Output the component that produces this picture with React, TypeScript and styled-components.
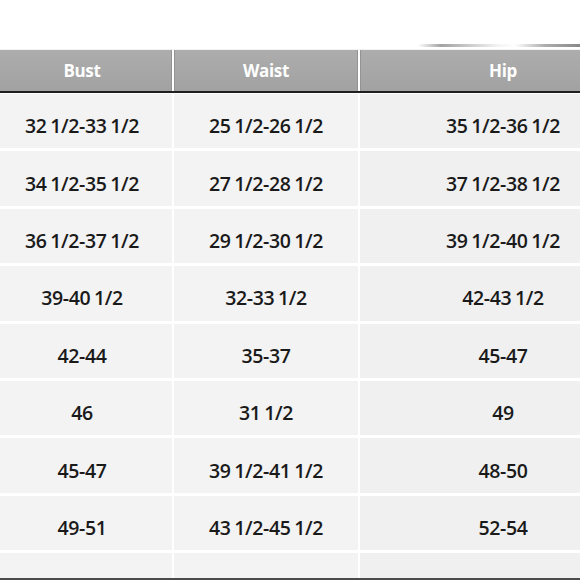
import React from "react";
import styled, { createGlobalStyle } from "styled-components";

const GlobalStyle = createGlobalStyle`
  html, body {
    margin: 0;
    padding: 0;
    background: #ffffff;
    overflow: hidden;
  }
  body {
    font-family: "Open Sans", "Liberation Sans", sans-serif;
  }
`;

const Sheet = styled.div`
  width: 656px;
  height: 580px;
  margin-left: -8px;
  overflow: hidden;
  display: flex;
  flex-direction: column;
  background: #ffffff;
  border-bottom: 2px solid #4b4b4b;
  box-sizing: border-box;
`;

const TopBand = styled.div`
  height: 49px;
  flex-shrink: 0;
  display: flex;
  align-items: flex-end;
`;

const EdgeShadow = styled.div`
  width: 230px;
  height: 3px;
  margin-left: 426px;
  margin-bottom: 2px;
  background: linear-gradient(
    to right,
    rgba(150, 150, 150, 0) 0%,
    rgba(140, 140, 140, 0.8) 10%,
    rgba(200, 200, 200, 0.2) 35%,
    rgba(255, 255, 255, 0) 42%,
    rgba(140, 140, 140, 0.7) 55%,
    #707070 80%,
    #666 100%
  );
`;

const cols = "180px 184px 286px";

const HeaderRow = styled.div`
  display: grid;
  grid-template-columns: ${cols};
  column-gap: 2px;
  background: #ffffff;
  border-top: 1px solid #f2f2f2;
  border-bottom: 2px solid #1f1f1f;
  flex-shrink: 0;
`;

const HeadCell = styled.div`
  height: 41px;
  display: flex;
  align-items: center;
  justify-content: center;
  background: linear-gradient(#adadad, #a6a6a6 60%, #a2a2a2);
  box-shadow: inset 1px 0 0 #939393, inset -1px 0 0 #939393;
  color: #ffffff;
  font-weight: 700;
  font-size: 17px;
  letter-spacing: -0.3px;
`;

const Body = styled.div`
  display: grid;
  grid-template-columns: ${cols};
  grid-auto-rows: 54.4px;
  column-gap: 2px;
  row-gap: 3px;
  padding-top: 1px;
  background: #ffffff;
`;

const Cell = styled.div<{ $shade?: boolean }>`
  display: flex;
  align-items: center;
  justify-content: center;
  padding-top: 9px;
  box-sizing: border-box;
  background: ${(p) => (p.$shade ? "#f0f0f0" : "#f3f3f3")};
  color: #1a1a1a;
  font-size: 19.5px;
  font-weight: 600;
  letter-spacing: -0.4px;
  word-spacing: -0.8px;
  white-space: nowrap;
`;

const rows: [string, string, string][] = [
  ["32 1/2-33 1/2", "25 1/2-26 1/2", "35 1/2-36 1/2"],
  ["34 1/2-35 1/2", "27 1/2-28 1/2", "37 1/2-38 1/2"],
  ["36 1/2-37 1/2", "29 1/2-30 1/2", "39 1/2-40 1/2"],
  ["39-40 1/2", "32-33 1/2", "42-43 1/2"],
  ["42-44", "35-37", "45-47"],
  ["46", "31 1/2", "49"],
  ["45-47", "39 1/2-41 1/2", "48-50"],
  ["49-51", "43 1/2-45 1/2", "52-54"],
  ["53-55", "47 1/2-49 1/2", "56-58"],
];

export default function App() {
  return (
    <>
      <GlobalStyle />
      <Sheet>
        <TopBand>
          <EdgeShadow />
        </TopBand>
        <HeaderRow>
          <HeadCell>Bust</HeadCell>
          <HeadCell>Waist</HeadCell>
          <HeadCell>Hip</HeadCell>
        </HeaderRow>
        <Body>
          {rows.map((r, i) =>
            r.map((v, j) => (
              <Cell key={`${i}-${j}`} $shade={j === 2}>
                {v}
              </Cell>
            ))
          )}
        </Body>
      </Sheet>
    </>
  );
}
